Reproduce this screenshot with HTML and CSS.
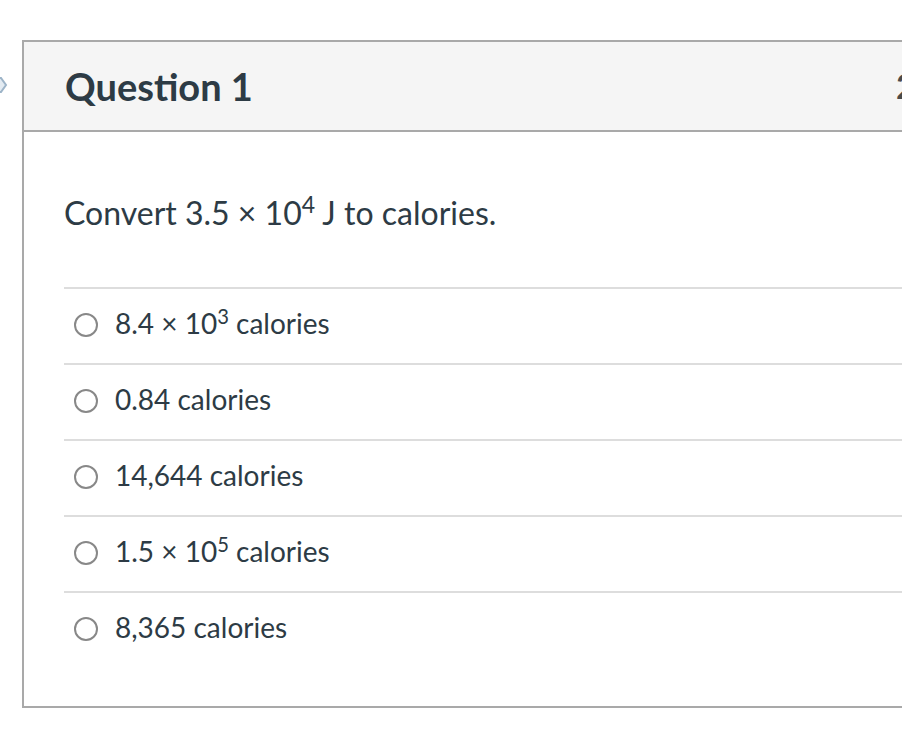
FILE: index.html
```html
<!DOCTYPE html>
<html>
<head>
<meta charset="utf-8">
<link rel="stylesheet" href="styles.css">
</head>
<body>
<div class="page">
  <div class="gutter">
    <svg class="flag" width="8" height="20" viewBox="0 0 8 20"><path d="M-6 3 L1 3 L6 10 L1 17 L-6 17 Z" fill="#e3ebf2" stroke="#9db4c8" stroke-width="2"/></svg>
  </div>
  <div class="card">
    <div class="header">
      <h2 class="title">Question 1</h2>
      <span class="pts">2 pts</span>
    </div>
    <div class="content">
      <p class="question">Convert 3.5 × 10<sup>4</sup> J to calories.</p>
      <div class="answers">
        <label class="answer"><span class="radio"></span><span class="atext">8.4 × 10<sup>3</sup> calories</span></label>
        <label class="answer"><span class="radio"></span><span class="atext">0.84 calories</span></label>
        <label class="answer"><span class="radio"></span><span class="atext">14,644 calories</span></label>
        <label class="answer"><span class="radio"></span><span class="atext">1.5 × 10<sup>5</sup> calories</span></label>
        <label class="answer"><span class="radio"></span><span class="atext">8,365 calories</span></label>
      </div>
    </div>
  </div>
</div>
</body>
</html>
```

FILE: styles.css
```css
html, body {
  margin: 0;
  padding: 0;
  background: #ffffff;
  overflow: hidden;
  width: 902px;
  height: 730px;
}
body {
  font-family: Lato, "Noto Sans", sans-serif;
  color: #2d3b45;
}
.page {
  display: flex;
  align-items: flex-start;
}
.gutter {
  width: 22px;
  flex: none;
  padding-top: 75px;
}
.flag {
  display: block;
}
.card {
  flex: none;
  margin-top: 40px;
  width: 1000px;
  border: 2px solid #a9a9a9;
}
.header {
  height: 88px;
  background: #f5f5f5;
  border-bottom: 2px solid #a9a9a9;
  display: grid;
  grid-template-columns: 831px auto;
  align-items: center;
  padding-left: 41px;
}
.title {
  margin: 0;
  font-size: 38px;
  font-weight: 700;
  line-height: 1;
  color: #2d3b45;
}
.pts {
  font-size: 34px;
  font-weight: 700;
  color: #4a4a4a;
  line-height: 1;
}
.content {
  padding: 60px 0 39px 40px;
}
.question {
  margin: 0 0 53px 0;
  font-size: 32px;
  line-height: 42px;
}
sup {
  font-size: 0.72em;
  line-height: 0;
  vertical-align: 0.52em;
}
.answer {
  display: flex;
  align-items: center;
  height: 72px;
  padding-bottom: 2px;
  border-top: 2px solid #dddddd;
  padding-left: 10px;
  gap: 17px;
}
.radio {
  width: 20px;
  height: 20px;
  border: 2px solid #888888;
  border-radius: 50%;
  flex: none;
  background: #fff;
}
.atext {
  font-size: 28px;
  line-height: 30px;
  padding-bottom: 4px;
}
```
